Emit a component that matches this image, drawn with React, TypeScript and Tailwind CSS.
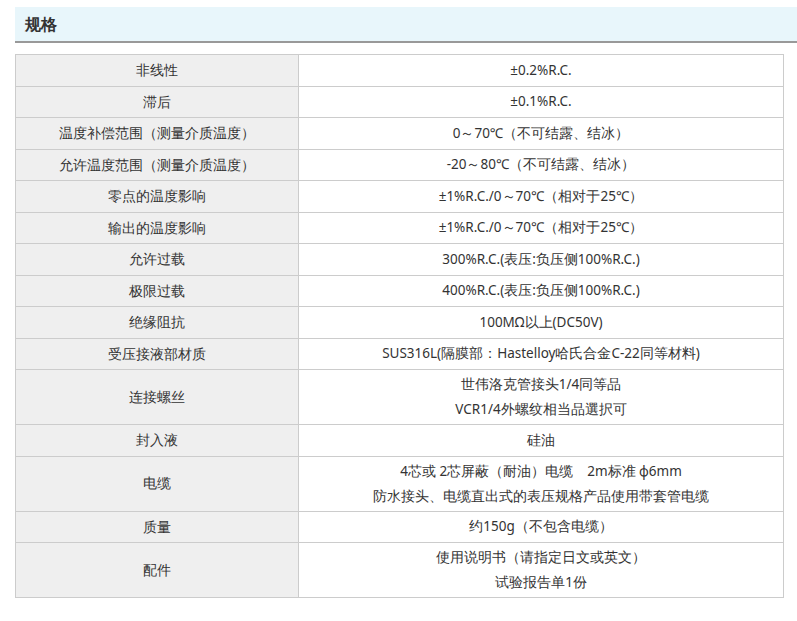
const rows: [string, string[]][] = [
  ["非线性", ["±0.2%R.C."]],
  ["滞后", ["±0.1%R.C."]],
  ["温度补偿范围（测量介质温度）", ["0～70℃（不可结露、结冰）"]],
  ["允许温度范围（测量介质温度）", ["-20～80℃（不可结露、结冰）"]],
  ["零点的温度影响", ["±1%R.C./0～70℃（相对于25℃）"]],
  ["输出的温度影响", ["±1%R.C./0～70℃（相对于25℃）"]],
  ["允许过载", ["300%R.C.(表压:负压侧100%R.C.)"]],
  ["极限过载", ["400%R.C.(表压:负压侧100%R.C.)"]],
  ["绝缘阻抗", ["100MΩ以上(DC50V)"]],
  ["受压接液部材质", ["SUS316L(隔膜部：Hastelloy哈氏合金C-22同等材料)"]],
  ["连接螺丝", ["世伟洛克管接头1/4同等品", "VCR1/4外螺纹相当品選択可"]],
  ["封入液", ["硅油"]],
  ["电缆", ["4芯或 2芯屏蔽（耐油）电缆　2m标准 φ6mm", "防水接头、电缆直出式的表压规格产品使用带套管电缆"]],
  ["质量", ["约150g（不包含电缆）"]],
  ["配件", ["使用说明书（请指定日文或英文）", "试验报告单1份"]],
];

export default function App() {
  return (
    <div className="w-[797px] h-[621px] bg-white pt-[7px] pl-[15px] text-[13.5px] text-[#333] font-['Open_Sans','Noto_Sans_CJK_SC',sans-serif]">
      <div className="h-[36px] bg-[#e8f6fb] border-b-2 border-[#999] flex items-center pl-[10px]">
        <h2 className="text-[16px] font-bold text-[#333]">规格</h2>
      </div>
      <table className="mt-[11px] w-[769px] border-collapse border border-[#ccc]">
        <tbody>
          {rows.map(([k, v]) => (
            <tr key={k}>
              <td className="w-[283px] bg-[#efefef] border border-[#ccc] text-center h-[31.5px] py-[2px]">{k}</td>
              <td className="border border-[#ccc] text-center py-[2px] leading-[25px]">
                {v.map((l) => (
                  <div key={l}>{l}</div>
                ))}
              </td>
            </tr>
          ))}
        </tbody>
      </table>
    </div>
  );
}
